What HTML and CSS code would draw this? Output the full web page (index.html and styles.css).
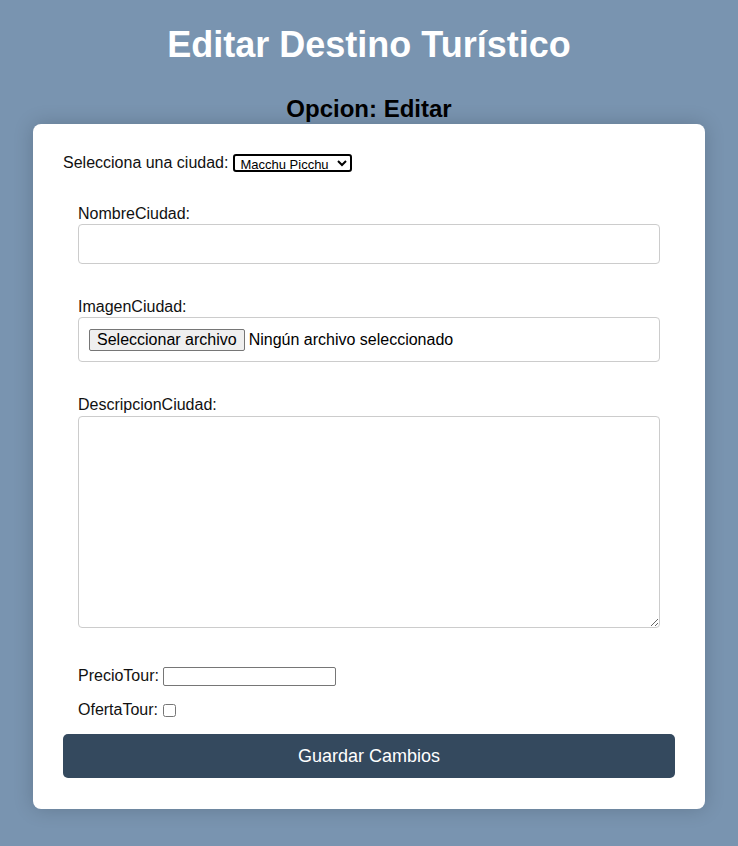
FILE: index.html
```html
<!DOCTYPE html>
<html lang="es">
<head>
<meta charset="utf-8">
<title>Editar Destino Turístico</title>
<link rel="stylesheet" href="styles.css">
</head>
<body>
<h1 class="title">Editar Destino Turístico</h1>
<h2 class="subtitle">Opcion: Editar</h2>
<form class="card">
  <div class="select-row">
    <label for="ciudad">Selecciona una ciudad:</label>
    <select id="ciudad" class="city-select">
      <option>Macchu Picchu</option>
    </select>
  </div>
  <div class="group group-first">
    <label class="field-label" for="nombre">NombreCiudad:</label>
    <input id="nombre" class="text-field" type="text">
  </div>
  <div class="group">
    <label class="field-label">ImagenCiudad:</label>
    <div class="file-box">
      <button type="button" class="file-btn">Seleccionar archivo</button>
      <span class="file-name">Ningún archivo seleccionado</span>
    </div>
  </div>
  <div class="group">
    <label class="field-label desc-label" for="desc">DescripcionCiudad:</label>
    <textarea id="desc" class="text-area"></textarea>
  </div>
  <div class="inline-row precio-row">
    <label for="precio">PrecioTour:</label>
    <input id="precio" class="small-input" type="text">
  </div>
  <div class="inline-row oferta-row">
    <label for="oferta">OfertaTour:</label>
    <input id="oferta" class="check" type="checkbox">
  </div>
  <button type="button" class="submit">Guardar Cambios</button>
</form>
</body>
</html>
```
FILE: styles.css
```css
html, body {
  margin: 0;
  padding: 0;
}
body {
  background: #7994b0;
  font-family: "Liberation Sans", Arial, sans-serif;
  color: #111;
  padding-bottom: 40px;
}
.title {
  margin: 24px 0 0;
  text-align: center;
  color: #fff;
  font-size: 36px;
  line-height: 42px;
  font-weight: bold;
}
.subtitle {
  margin: 30px 0 2px;
  text-align: center;
  color: #000;
  font-size: 24px;
  line-height: 26px;
  font-weight: bold;
}
.card {
  display: block;
  margin: 0 33px;
  background: #fff;
  border-radius: 8px;
  padding: 30px 30px 31px;
  box-shadow: 0 0 20px rgba(0, 0, 0, 0.18);
}
.select-row {
  display: flex;
  align-items: center;
  height: 18px;
  font-size: 16px;
  gap: 5px;
}
.city-select {
  font-family: "Liberation Sans", Arial, sans-serif;
  font-size: 13px;
  width: 119px;
  height: 18px;
  padding: 0 1px;
  border: 2px solid #000;
  border-radius: 3px;
  background: #fff;
  color: #000;
}
.group {
  margin: 34px 15px 0;
}
.group-first {
  margin-top: 33px;
}
.field-label {
  display: block;
  font-size: 16px;
  line-height: 18px;
  margin-bottom: 1px;
}
.desc-label {
  margin-bottom: 2px;
}
.text-field {
  display: block;
  box-sizing: border-box;
  width: 100%;
  height: 40px;
  padding: 10px;
  border: 1px solid #ccc;
  border-radius: 4px;
  font-size: 16px;
  font-family: inherit;
}
.file-box {
  box-sizing: border-box;
  height: 45px;
  border: 1px solid #ccc;
  border-radius: 4px;
  padding: 0 10px;
  display: flex;
  align-items: center;
  gap: 4px;
  font-size: 16px;
}
.file-btn {
  font-family: "Liberation Sans", Arial, sans-serif;
  font-size: 16px;
  height: 22px;
  padding: 0 7px;
  background: #efefef;
  border: 1px solid #767676;
  border-radius: 2px;
  color: #000;
  line-height: 18px;
}
.file-name {
  color: #000;
}
.text-area {
  display: block;
  box-sizing: border-box;
  width: 100%;
  height: 212px;
  padding: 10px;
  border: 1px solid #ccc;
  border-radius: 4px;
  font-family: inherit;
  font-size: 16px;
  resize: vertical;
}
.inline-row {
  display: flex;
  align-items: center;
  margin: 0 15px;
  font-size: 16px;
  height: 20px;
  gap: 4px;
}
.precio-row {
  margin-top: 38px;
}
.oferta-row {
  margin-top: 14px;
}
.small-input {
  box-sizing: border-box;
  width: 173px;
  height: 19px;
  border: 1px solid #767676;
  border-radius: 2px;
  padding: 1px 2px;
  font-size: 13px;
  font-family: inherit;
}
.check {
  width: 13px;
  height: 13px;
  margin: 0 0 0 1px;
}
.submit {
  display: block;
  width: 100%;
  height: 44px;
  margin-top: 14px;
  background: #34495e;
  color: #fff;
  border: none;
  border-radius: 5px;
  font-family: "Liberation Sans", Arial, sans-serif;
  font-size: 18px;
}
```
